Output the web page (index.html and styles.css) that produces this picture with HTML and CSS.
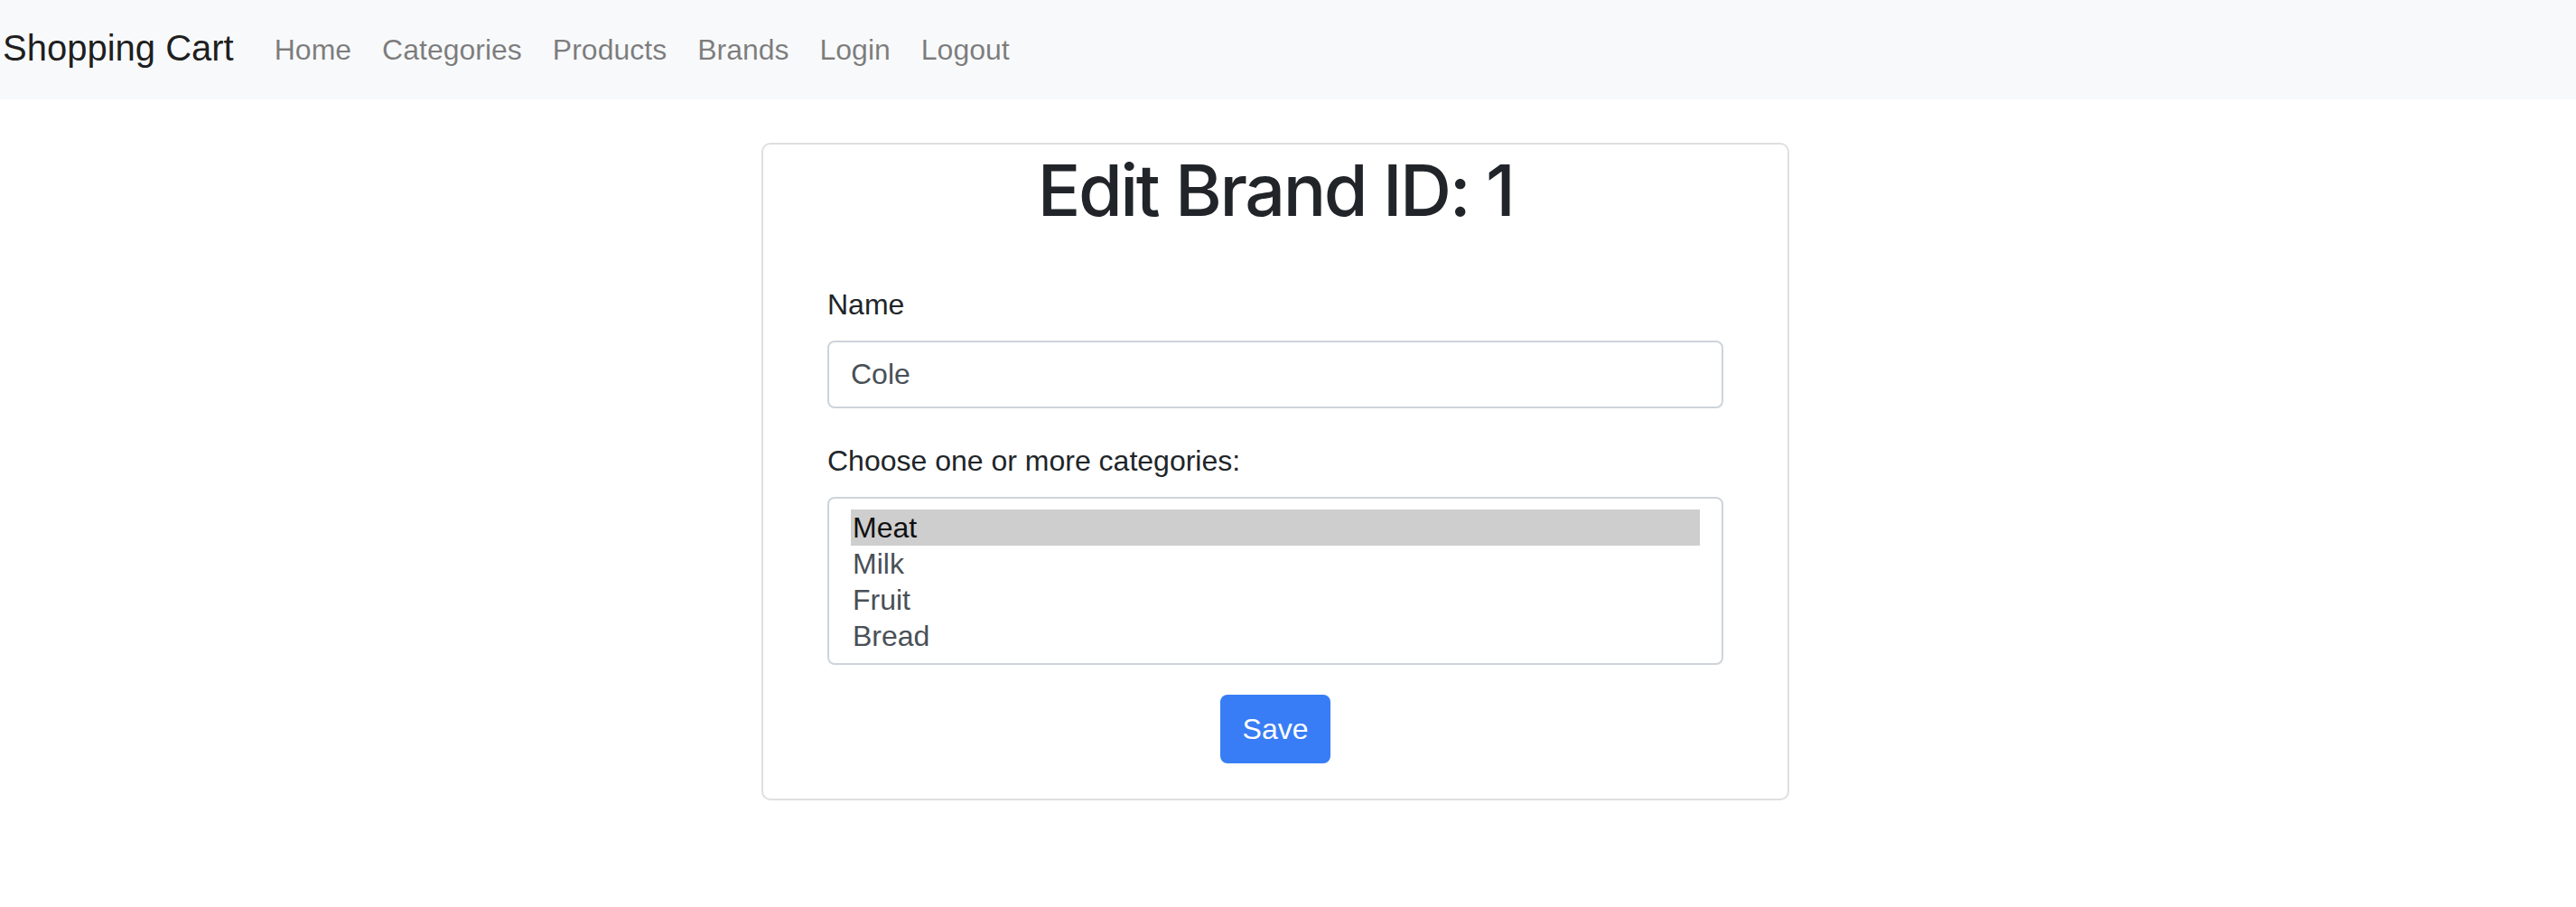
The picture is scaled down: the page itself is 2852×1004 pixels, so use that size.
FILE: index.html
```html
<!DOCTYPE html>
<html lang="en">
<head>
<meta charset="utf-8">
<title>Edit Brand</title>
<link rel="stylesheet" href="styles.css">
</head>
<body>
<nav class="navbar">
  <a class="brand" href="#">Shopping Cart</a>
  <ul class="nav">
    <li><a class="nav-link" href="#">Home</a></li>
    <li><a class="nav-link" href="#">Categories</a></li>
    <li><a class="nav-link" href="#">Products</a></li>
    <li><a class="nav-link" href="#">Brands</a></li>
    <li><a class="nav-link" href="#">Login</a></li>
    <li><a class="nav-link" href="#">Logout</a></li>
  </ul>
</nav>
<main class="main">
  <div class="card">
    <h1 class="title">Edit Brand ID: 1</h1>
    <form class="form">
      <label class="label" for="name">Name</label>
      <div class="input">Cole</div>
      <label class="label">Choose one or more categories:</label>
      <div class="select" role="listbox" aria-multiselectable="true">
        <div class="option selected" role="option">Meat</div>
        <div class="option" role="option">Milk</div>
        <div class="option" role="option">Fruit</div>
        <div class="option" role="option">Bread</div>
      </div>
      <div class="actions">
        <button class="btn" type="button">Save</button>
      </div>
    </form>
  </div>
</main>
</body>
</html>
```
FILE: styles.css
```css
* { box-sizing: border-box; }
html, body {
  margin: 0;
  padding: 0;
  background: #ffffff;
  font-family: "Liberation Sans", Arial, sans-serif;
  color: #212529;
}
.navbar {
  display: flex;
  align-items: flex-start;
  height: 110px;
  padding: 23px 0 0 3px;
  background: #f8f9fa;
}
.brand {
  font-size: 40px;
  line-height: 60px;
  color: rgba(0, 0, 0, 0.9);
  text-decoration: none;
  margin-right: 28px;
  white-space: nowrap;
}
.nav {
  display: flex;
  list-style: none;
  margin: 8px 0 0 0;
  padding: 0;
}
.nav-link {
  display: block;
  padding: 0 17px;
  font-size: 32px;
  line-height: 48px;
  color: rgba(0, 0, 0, 0.5);
  text-decoration: none;
}
.main {
  padding: 48px 28px 0 0;
}
.card {
  width: 1138px;
  margin: 0 auto;
  border: 2px solid #dfdfdf;
  border-radius: 10px;
  padding: 2px 71px 39px 71px;
}
.title {
  margin: 0;
  font-family: Inter, "Liberation Sans", sans-serif;
  font-size: 79px;
  line-height: 96px;
  font-weight: 500;
  text-align: center;
  letter-spacing: -2.4px;
  color: #212529;
}
.form {
  display: flex;
  flex-direction: column;
  padding-top: 55px;
}
.label {
  display: block;
  font-size: 32px;
  line-height: 48px;
  margin-bottom: 16px;
  color: #212529;
}
.input {
  height: 75px;
  border: 2px solid #ced4da;
  border-radius: 8px;
  padding: 0 24px;
  font-size: 32px;
  line-height: 71px;
  color: #495057;
  margin-bottom: 34px;
}
.select {
  border: 2px solid #ced4da;
  border-radius: 8px;
  padding: 12px 24px 10px 24px;
}
.option {
  height: 40px;
  font-size: 32px;
  line-height: 40px;
  padding: 0 2px;
  color: #495057;
}
.option.selected {
  background: #cecece;
  color: #101010;
}
.actions {
  display: flex;
  justify-content: center;
  padding-top: 33px;
}
.btn {
  height: 76px;
  padding: 0 23px;
  border: 2px solid #387df5;
  border-radius: 8px;
  background: #387df5;
  color: #ffffff;
  font-family: "Liberation Sans", Arial, sans-serif;
  font-size: 32px;
  line-height: 48px;
}
```
